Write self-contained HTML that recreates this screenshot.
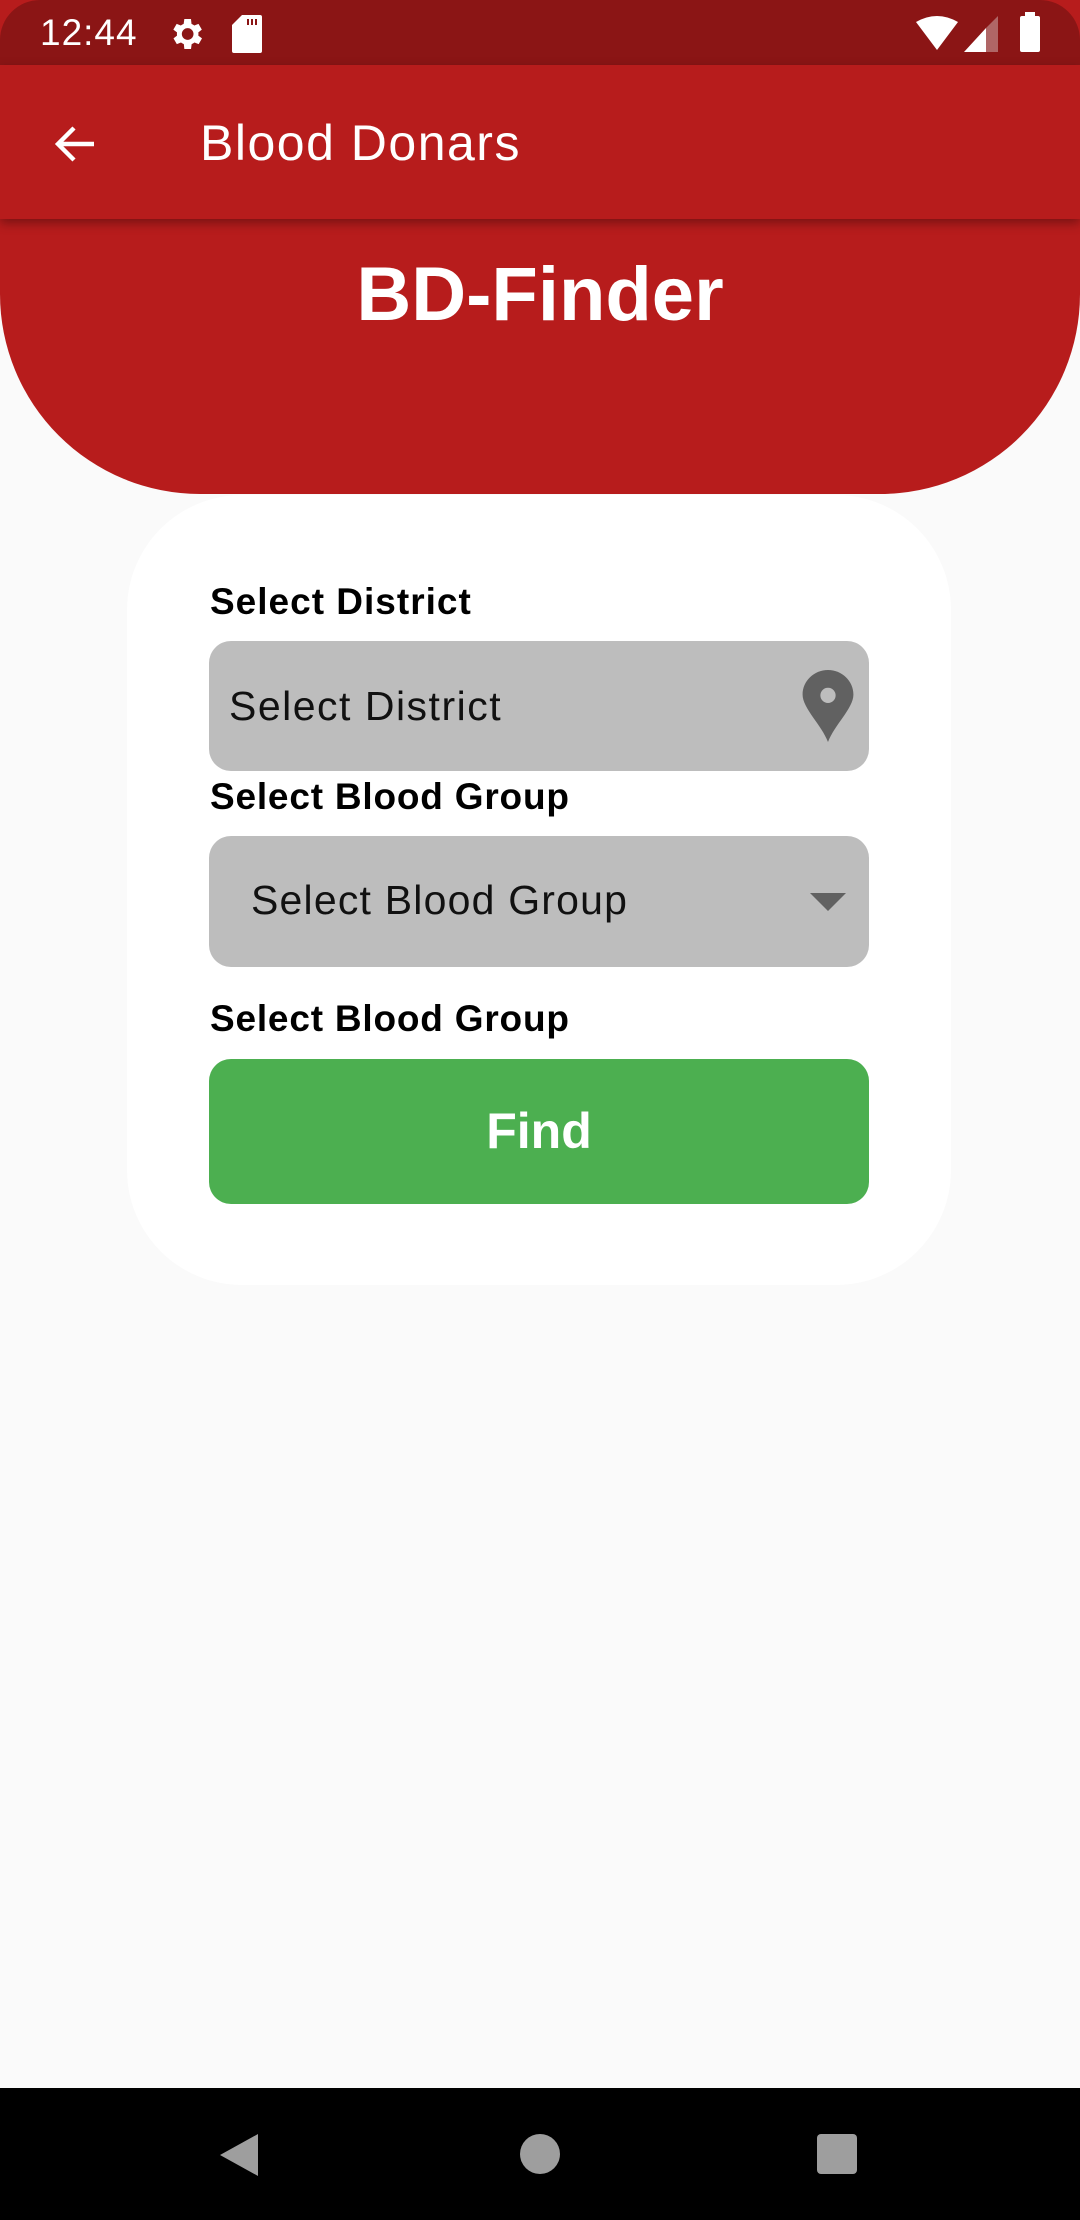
<!DOCTYPE html>
<html><head><meta charset="utf-8"><style>
*{margin:0;padding:0;box-sizing:border-box}
body{width:1080px;height:2220px;background:#fafafa;font-family:"Liberation Sans",sans-serif;position:relative;overflow:hidden}
.abs{position:absolute}
</style></head><body>
<div class="abs" style="left:0;top:0;width:1080px;height:494px;background:#b71c1c;border-radius:0 0 200px 200px"></div>
<div class="abs" style="left:0;top:0;width:1080px;height:65px;background:#8b1515;border-radius:40px 40px 0 0"></div>
<div class="abs" style="left:40px;top:10px;color:#fff;font-size:37px;line-height:46px;letter-spacing:1px">12:44</div>
<svg class="abs" style="left:166px;top:14px" width="40" height="40" viewBox="0 0 24 24"><path fill="#fff" d="M19.4 13a7.8 7.8 0 000-2l2.1-1.6-2-3.5-2.5 1a7 7 0 00-1.7-1L15 3h-4l-.4 2.9a7 7 0 00-1.7 1l-2.5-1-2 3.5L6.6 11a7.8 7.8 0 000 2l-2.1 1.6 2 3.5 2.5-1a7 7 0 001.7 1L11 21h4l.4-2.9a7 7 0 001.7-1l2.5 1 2-3.5zM13 15.5a3.5 3.5 0 110-7 3.5 3.5 0 010 7z"/></svg>
<svg class="abs" style="left:232px;top:15px" width="30" height="38" viewBox="0 0 15 19"><path fill="#fff" d="M5 0h9a1 1 0 011 1v17a1 1 0 01-1 1H1a1 1 0 01-1-1V5z"/><path stroke="#8b1515" stroke-width="1" d="M8 2v3M10 2v3M12 2v3"/></svg>
<svg class="abs" style="left:916px;top:16px" width="42" height="34" viewBox="0 0 42 34"><path fill="#fff" d="M0 6Q21-6 42 6L21 34z"/></svg>
<svg class="abs" style="left:964px;top:16px" width="34" height="36" viewBox="0 0 34 36"><path fill="#b06666" d="M34 0V36H22V12z"/><path fill="#fff" d="M22 12V36H0z"/></svg>
<div class="abs" style="left:1020px;top:16px;width:20px;height:36px;background:#fff;border-radius:2px"></div>
<div class="abs" style="left:1025px;top:12px;width:10px;height:6px;background:#fff"></div>
<div class="abs" style="left:0;top:65px;width:1080px;height:154px;background:#b71c1c;box-shadow:0 4px 10px rgba(0,0,0,.35)"></div>
<svg class="abs" style="left:52px;top:120px" width="48" height="48" viewBox="0 0 24 24"><path fill="none" stroke="#fff" stroke-width="2.2" d="M21 12H4M11 4l-8 8 8 8"/></svg>
<div class="abs" style="left:200px;top:112px;color:#fff;font-size:50px;line-height:62px;letter-spacing:1.5px">Blood Donars</div>
<div class="abs" style="left:0;top:250px;width:1080px;text-align:center;color:#fff;font-size:76px;font-weight:bold;line-height:90px">BD-Finder</div>
<div class="abs" style="left:127px;top:495px;width:824px;height:790px;background:#fff;border-radius:115px"></div>
<div class="abs" style="left:210px;top:580px;font-size:37px;font-weight:bold;line-height:44px;letter-spacing:1px">Select District</div>
<div class="abs" style="left:209px;top:641px;width:660px;height:130px;background:#bdbdbd;border-radius:22px"></div>
<div class="abs" style="left:229px;top:682px;font-size:41px;line-height:48px;color:#111;letter-spacing:1.5px">Select District</div>
<svg class="abs" style="left:802px;top:670px" width="52" height="72" viewBox="0 0 24 34"><path fill="#616161" d="M12 0C5.4 0 0 5.2 0 11.6 0 18 9 26 12 34c3-8 12-16 12-22.4C24 5.2 18.6 0 12 0z"/><circle cx="12" cy="12" r="3.6" fill="#bdbdbd"/></svg>
<div class="abs" style="left:210px;top:775px;font-size:37px;font-weight:bold;line-height:44px;letter-spacing:0.8px">Select Blood Group</div>
<div class="abs" style="left:209px;top:836px;width:660px;height:131px;background:#bdbdbd;border-radius:22px"></div>
<div class="abs" style="left:251px;top:876px;font-size:41px;line-height:48px;color:#111;letter-spacing:1.2px">Select Blood Group</div>
<svg class="abs" style="left:810px;top:893px" width="36" height="18" viewBox="0 0 36 18"><path fill="#616161" d="M0 0h36L18 18z"/></svg>
<div class="abs" style="left:210px;top:997px;font-size:37px;font-weight:bold;line-height:44px;letter-spacing:0.8px">Select Blood Group</div>
<div class="abs" style="left:209px;top:1059px;width:660px;height:145px;background:#4caf50;border-radius:22px;color:#fff;font-size:50px;font-weight:bold;text-align:center;line-height:145px">Find</div>
<div class="abs" style="left:0;top:2088px;width:1080px;height:132px;background:#000"></div>
<svg class="abs" style="left:218px;top:2132px" width="42" height="46" viewBox="0 0 42 46"><path fill="#9e9e9e" d="M40 2V44L2 23z"/></svg>
<div class="abs" style="left:520px;top:2134px;width:40px;height:40px;border-radius:50%;background:#9e9e9e"></div>
<div class="abs" style="left:817px;top:2134px;width:40px;height:40px;border-radius:4px;background:#9e9e9e"></div>
</body></html>
